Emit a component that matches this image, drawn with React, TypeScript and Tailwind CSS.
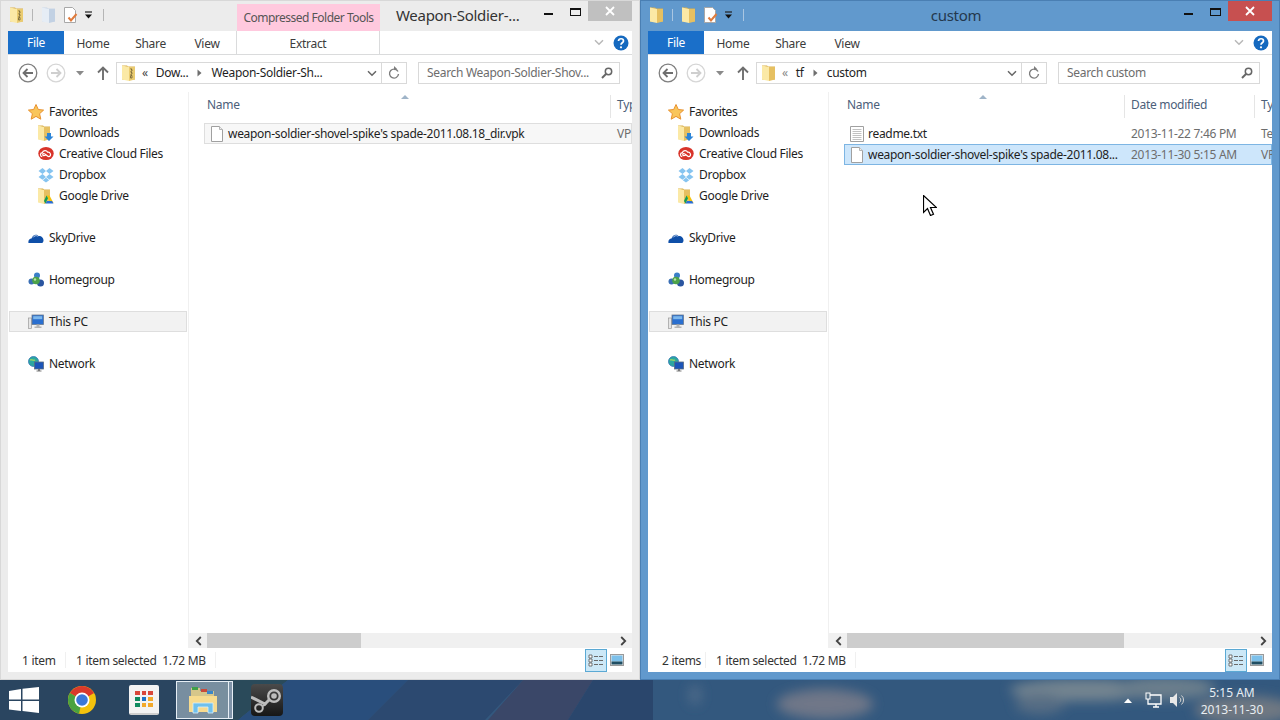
const uiFont = { fontFamily: '"Noto Sans", "Liberation Sans", sans-serif' };

function FolderIcon({ size = 16, pale = false }: { size?: number; pale?: boolean }) {
  return (
    <svg width={size} height={size} viewBox="0 0 16 16" className="shrink-0">
      <path d="M1 .5h5l1 1h7v13H1z" fill={pale ? '#c9d6e6' : '#d9b04e'} />
      <path d="M1 .5l7 1.5v14L1 14.500z" fill={pale ? '#e6edf5' : '#fbe9a6'} />
      <path d="M8 2h6v12.500l-6 1.500z" fill={pale ? '#c2d1e3' : '#e6c061'} />
    </svg>
  );
}

function ZipFolderIcon() {
  return (
    <svg width="16" height="16" viewBox="0 0 16 16" className="shrink-0">
      <path d="M1 .5h5l1 1h7v13H1z" fill="#d9b04e" />
      <path d="M1 .5l7 1.500v14L1 14.500z" fill="#fbe9a6" />
      <path d="M8 2h6v12.500l-6 1.500z" fill="#eacb70" />
      <path d="M10 3v1.500h1V6h-1v1.500h1V9h-1v1.500h1V13H9.500v-2.500" fill="none" stroke="#6f6136" strokeWidth="0.800" />
    </svg>
  );
}

function DocCheckIcon() {
  return (
    <svg width="16" height="16" viewBox="0 0 16 16" className="shrink-0">
      <path d="M1.500 0.500h8l3 3v12h-11z" fill="#fff" stroke="#a8a8a8" />
      <path d="M5.500 10.500l2.500 3 5.500-6.500" fill="none" stroke="#e07b3c" strokeWidth="2" />
    </svg>
  );
}

function FileIcon() {
  return (
    <svg width="14" height="16" viewBox="0 0 14 16" className="shrink-0">
      <path d="M1.500 0.500h8l3 3v12h-11z" fill="#fff" stroke="#a0a0a0" />
      <path d="M9.500 0.500v3h3" fill="#eee" stroke="#b5b5b5" />
    </svg>
  );
}

function TextFileIcon() {
  return (
    <svg width="14" height="16" viewBox="0 0 14 16" className="shrink-0">
      <path d="M0.500 0.500h13v15h-13z" fill="#fff" stroke="#a0a0a0" />
      <path d="M2.500 3.500h9M2.500 5.500h9M2.500 7.500h9M2.500 9.500h9M2.500 11.500h9M2.500 13.500h9" stroke="#c2c2c2" />
    </svg>
  );
}

function QatDropdown() {
  return (
    <svg width="9" height="8" viewBox="0 0 9 8" className="shrink-0">
      <path d="M1 1h7" stroke="#222" strokeWidth="1.200" />
      <path d="M1 3.500h7L4.500 7.500z" fill="#111" />
    </svg>
  );
}

function NavButtons() {
  return (
    <div className="flex items-center shrink-0 w-[108px] h-[22px]">
      <svg width="20" height="20" viewBox="0 0 20 20" className="ml-[10px]">
        <circle cx="10" cy="10" r="8.800" fill="#fff" stroke="#7f7f7f" strokeWidth="1.300" />
        <path d="M15 10H6M9.500 6l-4 4 4 4" fill="none" stroke="#6e6e6e" strokeWidth="1.800" />
      </svg>
      <svg width="20" height="20" viewBox="0 0 20 20" className="ml-[8px]">
        <circle cx="10" cy="10" r="8.800" fill="#fff" stroke="#d6d6d6" strokeWidth="1.300" />
        <path d="M5 10h9M10.500 6l4 4-4 4" fill="none" stroke="#cfcfcf" strokeWidth="1.800" />
      </svg>
      <svg width="8" height="5" viewBox="0 0 8 5" className="ml-[10px]">
        <path d="M0 0h8L4 4.500z" fill="#8a8a8a" />
      </svg>
      <svg width="12" height="14" viewBox="0 0 12 14" className="ml-[13px]">
        <path d="M6 14V2M1 6.500L6 1.500l5 5" fill="none" stroke="#6f6f6f" strokeWidth="1.900" />
      </svg>
    </div>
  );
}

function Chevron({ className, color = '#7a7a7a' }: { className?: string; color?: string }) {
  return (
    <svg width="10" height="7" viewBox="0 0 10 7" className={className}>
      <path d="M1 1.200l4 4 4-4" fill="none" stroke={color} strokeWidth="1.500" />
    </svg>
  );
}

function AddressBar({ zip, crumbs }: { zip: boolean; crumbs: string[] }) {
  return (
    <div className="w-[291px] h-[22px] border border-[#d9d9d9] flex items-center shrink-0">
      <div className="flex-1 flex items-center min-w-0 pl-1 text-[12px] text-[#1e1e1e]">
        {zip ? <ZipFolderIcon /> : <FolderIcon />}
        <span className={`ml-[5px] text-[12px] ${zip ? 'text-[#444]' : 'text-[#888]'}`}>«</span>
        {crumbs.map((c, i) => (
          <span key={c} className="flex items-center">
            {i > 0 && (
              <svg width="5" height="8" viewBox="0 0 5 8" className="mx-[9px]">
                <path d="M0.500 0.500L4.500 4l-4 3.500z" fill="#6e6e6e" />
              </svg>
            )}
            <span className={i === 0 ? 'ml-[8px]' : ''}>{c}</span>
          </span>
        ))}
      </div>
      <Chevron className="mr-[1px]" color="#666" />
      <div className="w-px h-[20px] bg-[#d9d9d9] ml-[3px]" />
      <svg width="24" height="20" viewBox="0 0 24 20">
        <path d="M16 8.500A4.500 4.500 0 1 0 16.500 11" fill="none" stroke="#7d7d7d" strokeWidth="1.400" />
        <path d="M12 3l3 2.800-3 1.400z" fill="#7d7d7d" />
      </svg>
    </div>
  );
}

function Star() {
  return (
    <svg width="16" height="16" viewBox="0 0 16 16">
      <path d="M8 .5l2.300 5 5.300.6-4 3.600 1.200 5.500L8 12.400l-4.800 2.800 1.200-5.500-4-3.600 5.300-.6z" fill="#f9c65c" stroke="#e8912f" />
    </svg>
  );
}

function DownloadsIcon() {
  return (
    <svg width="16" height="16" viewBox="0 0 16 16">
      <path d="M0 .5h5l1 1h6v12.500H0z" fill="#d9b04e" />
      <path d="M0 .5l6 1.500v14l-6-1.500z" fill="#fbe9a6" />
      <path d="M6 2h6v12l-6 2z" fill="#e6c061" />
      <path d="M9 8h4v3.500h2.500L11 16l-4.500-4.500H9z" fill="#2b84d8" />
    </svg>
  );
}

function CreativeCloudIcon() {
  return (
    <svg width="17" height="15" viewBox="0 0 17 15">
      <ellipse cx="8.500" cy="7.500" rx="8.200" ry="7" fill="#d8342a" />
      <path d="M4.500 10.800c-2.400-.1-2.700-3.800.1-4.200.8-2.800 4.500-3 5.500-.6 3-.5 4.700 4 1.500 4.800-2 .4-3.700-3.600-5.500-3.300-1.600.3-1.200 2.300.1 2.300 1 0 1.500-.5 2.200-1.100" fill="none" stroke="#fff" strokeWidth="1.300" />
    </svg>
  );
}

function DropboxIcon() {
  return (
    <svg width="16" height="16" viewBox="0 0 16 16">
      <path d="M4.500 1L.5 4l4 3 3.500-3zM11.500 1L8 4l3.500 3 4-3zM.5 10l4-3 3.500 3-3.500 2.800zM15.500 10l-4-3L8 10l3.500 2.800zM4.800 13.300L8 10.800l3.200 2.500L8 15.500z" fill="#86c4f0" />
    </svg>
  );
}

function GoogleDriveIcon() {
  return (
    <svg width="16" height="16" viewBox="0 0 16 16">
      <path d="M0 .5h5l1 1h6v12.500H0z" fill="#d9b04e" />
      <path d="M0 .5l6 1.500v14l-6-1.500z" fill="#fbe9a6" />
      <path d="M6 2h6v12l-6 2z" fill="#e6c061" />
      <path d="M8.500 7.500h3l4 7.500h-3z" fill="#f4c20d" />
      <path d="M8.500 7.500l1.500 2.800L7.500 15.500 6 13z" fill="#0f9d58" />
      <path d="M7.500 15.500h8L14 13H9z" fill="#2b6fd4" />
    </svg>
  );
}

function SkyDriveIcon() {
  return (
    <svg width="16" height="16" viewBox="0 0 16 16">
      <path d="M.5 13c-.6-2.600 1-4.300 3-4.400C4.600 5 8.400 3.400 10.600 6.200c2.300-.6 4.700 1.300 4.900 3.800.1 1.500-.5 3-1.500 3z" fill="#0f4fa8" />
      <path d="M5 7.500c1-1.700 3-2.400 4.800-1.300" fill="none" stroke="#fff" strokeWidth="0.700" />
    </svg>
  );
}

function HomegroupIcon() {
  return (
    <svg width="16" height="16" viewBox="0 0 16 16">
      <circle cx="3.500" cy="9.500" r="3" fill="#3a6fb5" />
      <circle cx="12.500" cy="11" r="3.500" fill="#2a55a0" />
      <circle cx="9" cy="3.500" r="3" fill="#3a7fc8" />
      <circle cx="8" cy="8.500" r="3.800" fill="#4ca24a" />
      <circle cx="7" cy="7.500" r="1.200" fill="#bde2a8" />
    </svg>
  );
}

function ThisPcIcon() {
  return (
    <svg width="16" height="16" viewBox="0 0 16 16">
      <rect x="0.500" y="4" width="3" height="10.500" fill="#e5e5e5" stroke="#9a9a9a" strokeWidth="0.700" />
      <rect x="4" y="1" width="11.500" height="9.500" fill="#2a6fd0" stroke="#6a7a90" strokeWidth="0.800" />
      <rect x="5.200" y="2.200" width="9" height="3" fill="#7db7ec" />
      <path d="M8.500 10.500h3v2h2v1.500h-7v-1.500h2z" fill="#b5b5b5" />
    </svg>
  );
}

function NetworkIcon() {
  return (
    <svg width="16" height="16" viewBox="0 0 16 16">
      <circle cx="5.500" cy="5.500" r="5" fill="#2ba7a0" stroke="#3474b8" strokeWidth="0.800" />
      <path d="M2 4c2-1 3 1 5 0" fill="none" stroke="#8fd06a" strokeWidth="1.400" />
      <rect x="6.500" y="6" width="9" height="7" fill="#1c55b8" stroke="#5a6b80" strokeWidth="0.800" />
      <path d="M10 13h2v1.500h1.500v1h-5v-1H10z" fill="#7a7a7a" />
    </svg>
  );
}

function TreeRow({ icon, label, indent = false, selected = false }: { icon: React.ReactNode; label: string; indent?: boolean; selected?: boolean }) {
  return (
    <div
      className={`h-[21px] flex items-center ${indent ? 'pl-[30px]' : selected ? 'pl-[18px]' : 'pl-[20px]'} ${
        selected ? 'bg-[#f2f2f2] border border-[#dedede] w-[178px] ml-px' : ''
      }`}
    >
      <span className="w-[16px] h-[16px] flex items-center justify-center shrink-0">{icon}</span>
      <span className="ml-[5px] text-[12px] text-[#1e1e1e] whitespace-nowrap">{label}</span>
    </div>
  );
}

function NavPane() {
  return (
    <div className="w-[181px] shrink-0 border-r border-[#f0f0f0] pt-[9px]">
      <TreeRow icon={<Star />} label="Favorites" />
      <TreeRow indent icon={<DownloadsIcon />} label="Downloads" />
      <TreeRow indent icon={<CreativeCloudIcon />} label="Creative Cloud Files" />
      <TreeRow indent icon={<DropboxIcon />} label="Dropbox" />
      <TreeRow indent icon={<GoogleDriveIcon />} label="Google Drive" />
      <div className="h-[21px]" />
      <TreeRow icon={<SkyDriveIcon />} label="SkyDrive" />
      <div className="h-[21px]" />
      <TreeRow icon={<HomegroupIcon />} label="Homegroup" />
      <div className="h-[21px]" />
      <TreeRow selected icon={<ThisPcIcon />} label="This PC" />
      <div className="h-[21px]" />
      <TreeRow icon={<NetworkIcon />} label="Network" />
    </div>
  );
}

function ColumnHeader({ nameWidth, showDate, arrowLeft }: { nameWidth: string; showDate: boolean; arrowLeft: string }) {
  return (
    <div className="h-[23px] flex shrink-0 text-[12px] text-[#4c607a] whitespace-nowrap">
      <div className={`${nameWidth} relative border-r border-[#e5e5e5] pl-[18px] pt-[1px] shrink-0`}>
        Name
        <svg width="8" height="4" viewBox="0 0 8 4" className={`absolute top-0 ${arrowLeft}`}>
          <path d="M0 4L4 0l4 4z" fill="#9fb4c8" />
        </svg>
      </div>
      {showDate && <div className="w-[130px] border-r border-[#e5e5e5] pl-[6px] pt-[1px] shrink-0">Date modified</div>}
      <div className="pl-[6px] pt-[1px]">Type</div>
    </div>
  );
}

function ListScrollbar({ spacerW, thumbW }: { spacerW: string; thumbW: string }) {
  return (
    <div className="h-[15px] bg-[#f0f0f0] flex items-center shrink-0">
      <div className={`${spacerW} h-full flex items-center pl-[6px] shrink-0`}>
        <svg width="7" height="10" viewBox="0 0 7 10">
          <path d="M5.800 1L1.800 5l4 4" fill="none" stroke="#444" strokeWidth="1.800" />
        </svg>
      </div>
      <div className={`${thumbW} h-full bg-[#cdcdcd] shrink-0`} />
      <div className="flex-1" />
      <svg width="7" height="10" viewBox="0 0 7 10" className="mr-[5px]">
        <path d="M1.200 1l4 4-4 4" fill="none" stroke="#444" strokeWidth="1.800" />
      </svg>
    </div>
  );
}

function ViewButtons() {
  return (
    <div className="flex items-center pr-[8px]">
      <div className="w-[22px] h-[23px] bg-[#cce8f7] border border-[#5ba9d4] flex items-center justify-center">
        <svg width="16" height="13" viewBox="0 0 16 13">
          <path d="M1 1h3v3H1zM1 5h3v3H1zM1 9h3v3H1z" fill="#fff" stroke="#555" strokeWidth="0.800" />
          <path d="M6 2.500h9M6 6.500h9M6 10.500h9" stroke="#6a6a6a" strokeDasharray="4 1" />
        </svg>
      </div>
      <svg width="14" height="12" viewBox="0 0 14 12" className="ml-[3px]">
        <rect x="0.500" y="0.500" width="13" height="11" fill="#e8e8e8" stroke="#9a9a9a" />
        <rect x="1.500" y="1.500" width="11" height="6" fill="#7cc0ea" />
        <rect x="1.500" y="7.500" width="11" height="3" fill="#1f4e63" />
      </svg>
    </div>
  );
}

type WindowProps = {
  active: boolean;
  zip: boolean;
  title: string;
  crumbs: string[];
  searchLabel: string;
  nameWidth: string;
  arrowLeft: string;
  thumbW: string;
  count: string;
  children: React.ReactNode;
};

function ExplorerWindow({ active, zip, title, crumbs, searchLabel, nameWidth, arrowLeft, thumbW, count, children }: WindowProps) {
  return (
    <div className={`w-[640px] h-[680px] flex flex-col px-[7px] pb-[7px] border ${active ? 'bg-[#6199cd] border-[#4a7fb3]' : 'bg-[#ececec] border-[#d8d8d8]'}`}>
      <div className="h-[30px] flex items-start shrink-0">
        <div className="flex items-center h-[28px] w-[229px] shrink-0 pl-px">
          {zip ? <ZipFolderIcon /> : <FolderIcon />}
          <div className={`w-px h-[12px] ml-[7px] ${active ? 'bg-[#a9c6e2]' : 'bg-[#b5b5b5]'}`} />
          <span className="ml-[8px]"><FolderIcon pale={zip} /></span>
          <span className="ml-[6px]"><DocCheckIcon /></span>
          <span className="ml-[5px]"><QatDropdown /></span>
          <div className={`w-px h-[12px] ml-[10px] ${active ? 'bg-[#a9c6e2]' : 'bg-[#b5b5b5]'}`} />
        </div>
        {zip && (
          <div className="w-[143px] h-[27px] mt-[3px] bg-[#ffc9de] flex items-center justify-center text-[12px] tracking-[-0.5px] text-[#555] shrink-0">
            Compressed Folder Tools
          </div>
        )}
        <div className={`flex-1 h-[29px] flex items-center text-[15px] whitespace-nowrap ${active ? 'justify-center pr-[149px] text-[#24384d]' : 'pl-[16px] text-[#333]'}`}>
          {title}
        </div>
        <div className="flex items-start shrink-0">
          <div className="w-[26px] h-[20px] flex items-center pt-[5px]">
            <div className="w-[9px] h-[2px] bg-[#111]" />
          </div>
          <div className="w-[18px] h-[20px] flex items-start pt-[7px]">
            <div className="w-[11px] h-[8px] border border-[#111] border-t-2" />
          </div>
          <div className={`w-[44px] h-[20px] flex items-center justify-center text-white ${active ? 'bg-[#c75050]' : 'bg-[#c0c0c0]'}`}>
            <svg width="10" height="10" viewBox="0 0 10 10">
              <path d="M1 1l8 8M9 1l-8 8" stroke="#fff" strokeWidth="1.800" />
            </svg>
          </div>
        </div>
      </div>
      <div className="flex-1 bg-white flex flex-col min-h-0">
        <div className="h-[24px] flex border-b border-[#dadbdc] shrink-0 text-[12px] text-[#3c3c3c]">
          <div className="w-[56px] bg-[#1a6fc9] text-white flex items-center justify-center pt-px">File</div>
          <div className="w-[58px] flex items-center justify-center pt-[2px]">Home</div>
          <div className="w-[57px] flex items-center justify-center pt-[2px]">Share</div>
          <div className="w-[56px] flex items-center justify-center pt-[2px]">View</div>
          {zip && <div className="w-[144px] flex items-center justify-center border-x border-[#dadbdc] ml-px pt-[2px]">Extract</div>}
          <div className="flex-1 flex items-center justify-end pr-[3px]">
            <Chevron className="mr-[9px]" color="#b8b8b8" />
            <svg width="16" height="16" viewBox="0 0 16 16">
              <circle cx="8" cy="8" r="7.500" fill="#1569bf" />
              <path d="M5.500 6c.2-3 5-3 5 0 0 1.800-2.500 1.800-2.500 3.800" fill="none" stroke="#fff" strokeWidth="1.700" />
              <circle cx="8" cy="12.300" r="1.100" fill="#fff" />
            </svg>
          </div>
        </div>
        <div className="h-[37px] flex items-start pt-[7px] shrink-0">
          <NavButtons />
          <AddressBar zip={zip} crumbs={crumbs} />
          <div className="w-[202px] h-[22px] border border-[#d9d9d9] ml-[11px] flex items-center pl-[8px] pr-[6px] text-[12px] text-[#6d6d6d] shrink-0">
            <span className="flex-1 whitespace-nowrap overflow-hidden">{searchLabel}</span>
            <svg width="12" height="12" viewBox="0 0 12 12" className="shrink-0">
              <circle cx="7.500" cy="4.500" r="3.200" fill="none" stroke="#666" strokeWidth="1.500" />
              <path d="M5 7L1 11" stroke="#666" strokeWidth="2" />
            </svg>
          </div>
        </div>
        <div className="flex-1 flex min-h-0">
          <NavPane />
          <div className="flex-1 min-w-0 flex flex-col pt-[3px] overflow-hidden">
            <ColumnHeader nameWidth={nameWidth} showDate={active} arrowLeft={arrowLeft} />
            <div className="flex-1 pt-[5px] min-h-0">{children}</div>
            <ListScrollbar spacerW="w-[18px]" thumbW={thumbW} />
          </div>
        </div>
        <div className="h-[24px] flex items-center shrink-0 text-[12px] text-[#333]">
          <div className="w-[57px] pl-[14px] pt-px shrink-0">{count}</div>
          <div className="w-px h-[16px] bg-[#f0f0f0]" />
          <div className="pl-[10px] pt-px whitespace-pre">1 item selected  1.72 MB</div>
          <div className="w-px h-[16px] bg-[#f0f0f0] ml-[9px]" />
          <div className="flex-1" />
          <ViewButtons />
        </div>
      </div>
    </div>
  );
}

function FileRow({ icon, name, date, type, className, nameClass }: { icon: React.ReactNode; name: string; date?: string; type: string; className: string; nameClass: string }) {
  return (
    <div className={`h-[21px] ml-[15px] flex items-center whitespace-nowrap text-[12px] border ${className}`}>
      <span className="w-[23px] flex justify-center shrink-0">{icon}</span>
      <span className={`${nameClass} shrink-0 text-[#1e1e1e]`}>{name}</span>
      {date && <span className="w-[130px] shrink-0 text-[#6d6d6d]">{date}</span>}
      <span className="text-[#6d6d6d]">{type}</span>
    </div>
  );
}

function WindowsLogo() {
  return (
    <svg width="30" height="26" viewBox="0 0 30 26">
      <path d="M0 4l12-2v10.500H0zM13.500 1.800L30 0v12.500H13.500zM0 14h12v10L0 22.500zM13.500 14H30v12l-16.500-2z" fill="#fff" />
    </svg>
  );
}

function ChromeLogo() {
  return (
    <svg width="30" height="30" viewBox="0 0 30 30">
      <circle cx="15" cy="15" r="14" fill="#f4c20d" />
      <path d="M15 15L2.900 8A14 14 0 0 1 27.100 8z" fill="#d9392b" />
      <path d="M15 15L2.900 8A14 14 0 0 0 12 28.700z" fill="#4aa23f" />
      <circle cx="15" cy="15" r="7.500" fill="#fff" />
      <circle cx="15" cy="15" r="5.800" fill="#3b78d8" />
    </svg>
  );
}

function AppsTile() {
  const colors = ['bg-[#d9473b]', 'bg-[#d9473b]', 'bg-[#d9473b]', 'bg-[#0f8a5f]', 'bg-[#1e73c8]', 'bg-[#f2a92c]', 'bg-[#0f8a5f]', 'bg-[#f2a92c]', 'bg-[#f2a92c]'];
  return (
    <div className="w-[30px] h-[30px] rounded-[2px] bg-[#f3f3f3] border-b-2 border-[#cfcfcf] grid grid-cols-3 gap-[2px] p-[6px]">
      {colors.map((c, i) => (
        <div key={i} className={c} />
      ))}
    </div>
  );
}

function ExplorerLogo() {
  return (
    <svg width="32" height="30" viewBox="0 0 32 30">
      <path d="M4 3h9v3h14v6H4z" fill="#d6c68a" />
      <path d="M5 2h6v3H5z" fill="#3f9f4a" />
      <path d="M14 4h6v3h-6z" fill="#c94a3a" />
      <path d="M20 6h6v3h-6z" fill="#3a86c8" />
      <path d="M2 11h28v16H2z" fill="#f7db8e" />
      <path d="M6 28V18h20v10h-5v-6H11v6z" fill="#6fc0ec" stroke="#d9f0fb" strokeWidth="0.800" />
    </svg>
  );
}

function SteamLogo() {
  return (
    <svg width="32" height="32" viewBox="0 0 32 32">
      <defs>
        <linearGradient id="steamBg" x1="0" y1="0" x2="0" y2="1">
          <stop offset="0" stopColor="#4a4a4a" />
          <stop offset="1" stopColor="#161616" />
        </linearGradient>
      </defs>
      <rect width="32" height="32" rx="4" fill="url(#steamBg)" />
      <circle cx="23" cy="12" r="5.800" fill="none" stroke="#bdbdbd" strokeWidth="2.400" />
      <circle cx="23" cy="12" r="2.800" fill="#bdbdbd" />
      <path d="M0 13l14 7 4-4" fill="none" stroke="#bdbdbd" strokeWidth="3" />
      <circle cx="8" cy="24" r="3.800" fill="none" stroke="#bdbdbd" strokeWidth="2" />
      <path d="M12 22l3-2" stroke="#bdbdbd" strokeWidth="2" />
    </svg>
  );
}

function Taskbar() {
  return (
    <div className="relative h-[40px] bg-[#2b4a6b] overflow-hidden flex items-center shrink-0">
      {/* wallpaper peeking out behind the taskbar */}
      <svg className="absolute inset-0" width="1280" height="40" viewBox="0 0 1280 40">
        <defs>
          <filter id="soft" x="-50%" y="-100%" width="200%" height="300%"><feGaussianBlur stdDeviation="6" /></filter>
        </defs>
        <rect width="1280" height="40" fill="#33587e" />
        <rect width="240" height="40" fill="#2a4560" />
        <path d="M228 0h60l-50 40h-40z" fill="#2a4a5a" />
        <path d="M288 0h120l-40 40H238z" fill="#294e7c" />
        <path d="M408 0h115l-38 40H368z" fill="#2c4970" />
        <path d="M523 0h70l-25 40h-80z" fill="#3a4768" />
        <path d="M593 0h60v40h-85z" fill="#2a466c" />
        <g filter="url(#soft)">
          <ellipse cx="825" cy="24" rx="48" ry="15" fill="#6f7788" />
          <ellipse cx="1085" cy="10" rx="75" ry="11" fill="#738490" />
          <ellipse cx="1165" cy="8" rx="50" ry="12" fill="#6b7e8c" />
          <ellipse cx="1040" cy="24" rx="25" ry="10" fill="#566d84" />
          <ellipse cx="695" cy="15" rx="6" ry="10" fill="#4f6c8a" />
          <ellipse cx="1245" cy="30" rx="50" ry="14" fill="#6f7882" />
        </g>
      </svg>
      <div className="relative flex items-center w-full h-full">
        <div className="w-[67px] pl-[9px] flex items-center shrink-0">
          <WindowsLogo />
        </div>
        <div className="w-[62px] shrink-0"><ChromeLogo /></div>
        <div className="w-[47px] shrink-0"><AppsTile /></div>
        <div className="w-[57px] h-[38px] flex shrink-0">
          <div className="w-[53px] h-full bg-[#8ca0b0]/80 border border-[#e6eef5] flex items-center justify-center">
            <ExplorerLogo />
          </div>
          <div className="w-[4px] h-full bg-[#7f94a8] border-y border-r border-[#e6eef5]" />
        </div>
        <div className="ml-[18px] shrink-0"><SteamLogo /></div>
        <div className="flex-1" />
        <div className="flex items-center pr-[18px] shrink-0">
          <svg width="8" height="5" viewBox="0 0 8 5">
            <path d="M0 5l4-4.500L8 5z" fill="#fff" />
          </svg>
          <svg width="17" height="17" viewBox="0 0 17 17" className="ml-[13px]">
            <rect x="1" y="1" width="4" height="6" fill="none" stroke="#fff" />
            <path d="M5 3h11v9H3V7" fill="none" stroke="#fff" strokeWidth="1.300" />
            <path d="M8 15h6M11 12v3" stroke="#fff" strokeWidth="1.300" />
          </svg>
          <svg width="15" height="14" viewBox="0 0 15 14" className="ml-[8px]">
            <path d="M0 4h3l4-4v14l-4-4H0z" fill="#e8e8e8" />
            <path d="M9.500 4.500a3 3 0 0 1 0 5M11.500 2.500a6 6 0 0 1 0 9" fill="none" stroke="#d5d5d5" />
          </svg>
          <div className="ml-[17px] mt-px w-[60px] flex flex-col items-center text-[12px] leading-[17px] tracking-normal text-[#e8eef3] whitespace-nowrap">
            <span>5:15 AM</span>
            <span>2013-11-30</span>
          </div>
        </div>
      </div>
    </div>
  );
}

export default function App() {
  return (
    <div style={uiFont} className="relative w-[1280px] h-[720px] overflow-hidden flex flex-col bg-[#2b4a6b] tracking-[-0.3px]">
      <div className="flex h-[680px] shrink-0">
        <ExplorerWindow
          active={false}
          zip
          title="Weapon-Soldier-..."
          crumbs={['Dow...', 'Weapon-Soldier-Sh...']}
          searchLabel="Search Weapon-Soldier-Shov..."
          nameWidth="w-[422px]"
          arrowLeft="left-[212px]"
          thumbW="w-[154px]"
          count="1 item"
        >
          <FileRow
            icon={<FileIcon />}
            name="weapon-soldier-shovel-spike's spade-2011.08.18_dir.vpk"
            type="VP"
            nameClass="w-[389px]"
            className="bg-[#f7f7f7] border-[#dedede]"
          />
        </ExplorerWindow>
        <ExplorerWindow
          active
          zip={false}
          title="custom"
          crumbs={['tf', 'custom']}
          searchLabel="Search custom"
          nameWidth="w-[296px]"
          arrowLeft="left-[150px]"
          thumbW="w-[277px]"
          count="2 items"
        >
          <FileRow icon={<TextFileIcon />} name="readme.txt" date="2013-11-22 7:46 PM" type="Te" nameClass="w-[263px]" className="border-transparent" />
          <FileRow
            icon={<FileIcon />}
            name="weapon-soldier-shovel-spike's spade-2011.08..."
            date="2013-11-30 5:15 AM"
            type="VP"
            nameClass="w-[263px]"
            className="bg-[#cde6fb] border-[#7db5e3]"
          />
        </ExplorerWindow>
      </div>
      <Taskbar />
      {/* mouse pointer sits over the list */}
      <svg width="14" height="21" viewBox="0 0 14 21" className="absolute left-[923px] top-[195px]">
        <path d="M.5.500v17l4-4 3 7 3-1.300-3-6.700h6z" fill="#fff" stroke="#000" strokeWidth="1.200" />
      </svg>
    </div>
  );
}
